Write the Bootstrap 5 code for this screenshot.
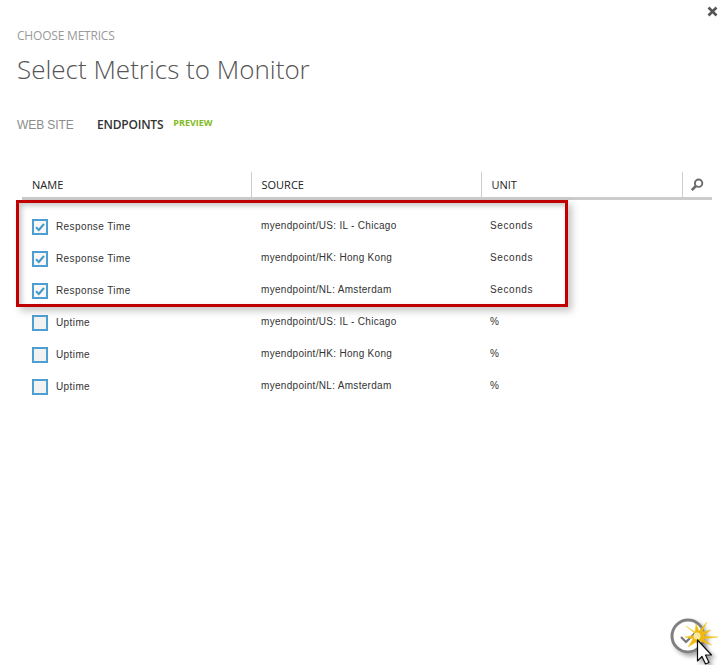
<!DOCTYPE html>
<html lang="en">
  <head>
    <meta charset="UTF-8" />
    <meta name="viewport" content="width=device-width, initial-scale=1.0" />
    <title>Select Metrics to Monitor</title>
    <link
      href="https://cdn.jsdelivr.net/npm/bootstrap@5.3.3/dist/css/bootstrap.min.css"
      rel="stylesheet"
    />
    <style>
      html, body { height: 665px; overflow: hidden; }
      body { background: #fff; font-family: "Open Sans", sans-serif; }
      .dialog-wrap { width: 725px; height: 665px; padding: 0 13px 0 17px; }
      .close-btn { right: 7px; top: 6px; line-height: 0; }
      .step-label { padding-top: 28px; height: 45px; font-size: 12px; line-height: 15px; color: #999; letter-spacing: -0.2px; }
      .dialog-title { height: 51px; margin: 0; font-size: 26px; line-height: 49px; font-weight: 300; color: #555; letter-spacing: 0; }
      .tabs-row { height: 76px; padding-top: 21px; font-size: 12px; line-height: 16px; }
      .tab-off { color: #8c8c8c; font-family: "Liberation Sans", sans-serif; letter-spacing: -0.1px; width: 80px; }
      .tab-on { color: #333; font-weight: 600; letter-spacing: -0.2px; }
      .tab-flag { color: #7fba20; font-size: 9px; font-weight: 700; line-height: 11px; margin: 0 0 0 10px; }
      .metrics-area { margin-left: 5px; width: 690px; }
      .metrics-table { table-layout: fixed; width: 690px; margin: 0; --bs-table-bg: transparent; }
      .metrics-table th { height: 25px; padding: 0 0 0 10px; font-size: 11px; line-height: 25px; font-weight: 400; color: #222; vertical-align: middle; border-left: 1px solid #ccc; }
      .metrics-table th:first-child { border-left: 0; }
      .metrics-table th.find-cell { padding-left: 7px; }
      .metrics-table thead { border-bottom: 3px solid #ccc; }
      .metrics-table td { height: 32px; padding: 0 0 0 10px; vertical-align: middle; font: 10px/12px "Liberation Sans", sans-serif; letter-spacing: 0.4px; color: #333; }
      .metrics-table .pull-up { padding-bottom: 2px; letter-spacing: 0.3px; }
      .metrics-table .unit-cell { padding-left: 9px; letter-spacing: 0.6px; }
      .metrics-table .row-spacer td { height: 12px; }
      .check-tile { width: 16px; height: 16px; border: 2px solid #4d9fd1; background: #f2f2f2; flex: none; line-height: 0; }
      .check-tile.is-on { background: #f7f7f7; }
      .focus-box { left: -6px; top: 28px; width: 552px; height: 107px; border: 3px solid #c00000; box-shadow: 4px 4px 7px rgba(70,70,70,.3), inset 3px 3px 5px rgba(70,70,70,.28); pointer-events: none; }
      .confirm-mark { right: 0; bottom: 0; }
    </style>
  </head>

  <body>
    <div class="dialog-wrap position-relative">
      <a class="close-btn position-absolute" href="#" aria-label="Close">
        <svg width="11" height="11" viewBox="0 0 11 11">
          <path d="M1.5 1.5l8 8M9.5 1.5l-8 8" stroke="#555" stroke-width="2.6" fill="none" />
        </svg>
      </a>

      <div class="step-label">CHOOSE METRICS</div>
      <h1 class="dialog-title">Select Metrics to Monitor</h1>

      <div class="tabs-row d-flex align-items-start">
        <span class="tab-off">WEB SITE</span>
        <span class="tab-on">ENDPOINTS</span>
        <span class="tab-flag">PREVIEW</span>
      </div>

      <div class="metrics-area position-relative">
        <table class="table table-borderless metrics-table">
          <colgroup>
            <col style="width: 229px" />
            <col style="width: 230px" />
            <col style="width: 201px" />
            <col style="width: 30px" />
          </colgroup>
          <thead>
            <tr>
              <th>NAME</th>
              <th>SOURCE</th>
              <th>UNIT</th>
              <th class="find-cell">
                <svg width="14" height="14" viewBox="0 0 14 14" class="d-block">
                  <circle cx="8.6" cy="5.2" r="3.7" fill="none" stroke="#6b6b6b" stroke-width="1.9" />
                  <path d="M5.8 8L1.8 12.2" stroke="#6b6b6b" stroke-width="2.6" fill="none" />
                </svg>
              </th>
            </tr>
          </thead>
          <tbody id="metricRows"></tbody>
        </table>
        <div class="focus-box position-absolute"></div>
      </div>

      <svg class="confirm-mark position-absolute" width="60" height="50" viewBox="665 615 60 50">
        <defs>
          <filter id="softShadow" x="-30%" y="-30%" width="170%" height="170%">
            <feDropShadow dx="3" dy="3" stdDeviation="2" flood-color="#000" flood-opacity=".35" />
          </filter>
        </defs>
        <g filter="url(#softShadow)">
          <circle cx="688" cy="636" r="16" fill="#fff" stroke="#808080" stroke-width="3" />
          <path d="M681 637l5 5 10-10" fill="none" stroke="#777" stroke-width="2.2" />
        </g>
        <path d="M697 635L686 626L695 632L696 624L699 631L707 622L702 632L711 630L703 636L718 637L703 639L712 645L700 641L702 650L696 642L688 647L693 639L685 637Z" fill="#efb70f" stroke="#f5cc2e" stroke-width=".5" />
        <circle cx="697" cy="636" r="3.5" fill="#f8e9a0" />
        <g filter="url(#softShadow)">
          <path d="M697.5 640V661L702 656.5L705.5 664L709 662.5L705.5 655H711.5Z" fill="#fff" stroke="#111" stroke-width="1.2" stroke-linejoin="round" />
        </g>
      </svg>
    </div>

    <script src="https://cdn.jsdelivr.net/npm/bootstrap@5.3.3/dist/js/bootstrap.bundle.min.js"></script>
    <script>
      const sources = ["myendpoint/US: IL - Chicago", "myendpoint/HK: Hong Kong", "myendpoint/NL: Amsterdam"];
      const tick = '<svg width="12" height="12" viewBox="0 0 12 12"><path d="M2 6.2l2.8 2.8L10 3" fill="none" stroke="#3f97d0" stroke-width="2"/></svg>';
      let html = '<tr class="row-spacer"><td colspan="4"></td></tr>';

      [["Response Time", "Seconds", true], ["Uptime", "%", false]].forEach(([name, unit, on]) => {
        sources.forEach((source) => {
          html += `<tr>
            <td><div class="d-flex align-items-center gap-2">
              <span class="check-tile d-inline-block${on ? " is-on" : ""}">${on ? tick : ""}</span>${name}
            </div></td>
            <td class="pull-up">${source}</td>
            <td class="pull-up unit-cell" colspan="2">${unit}</td>
          </tr>`;
        });
      });

      document.getElementById("metricRows").innerHTML = html;
    </script>
  </body>
</html>
